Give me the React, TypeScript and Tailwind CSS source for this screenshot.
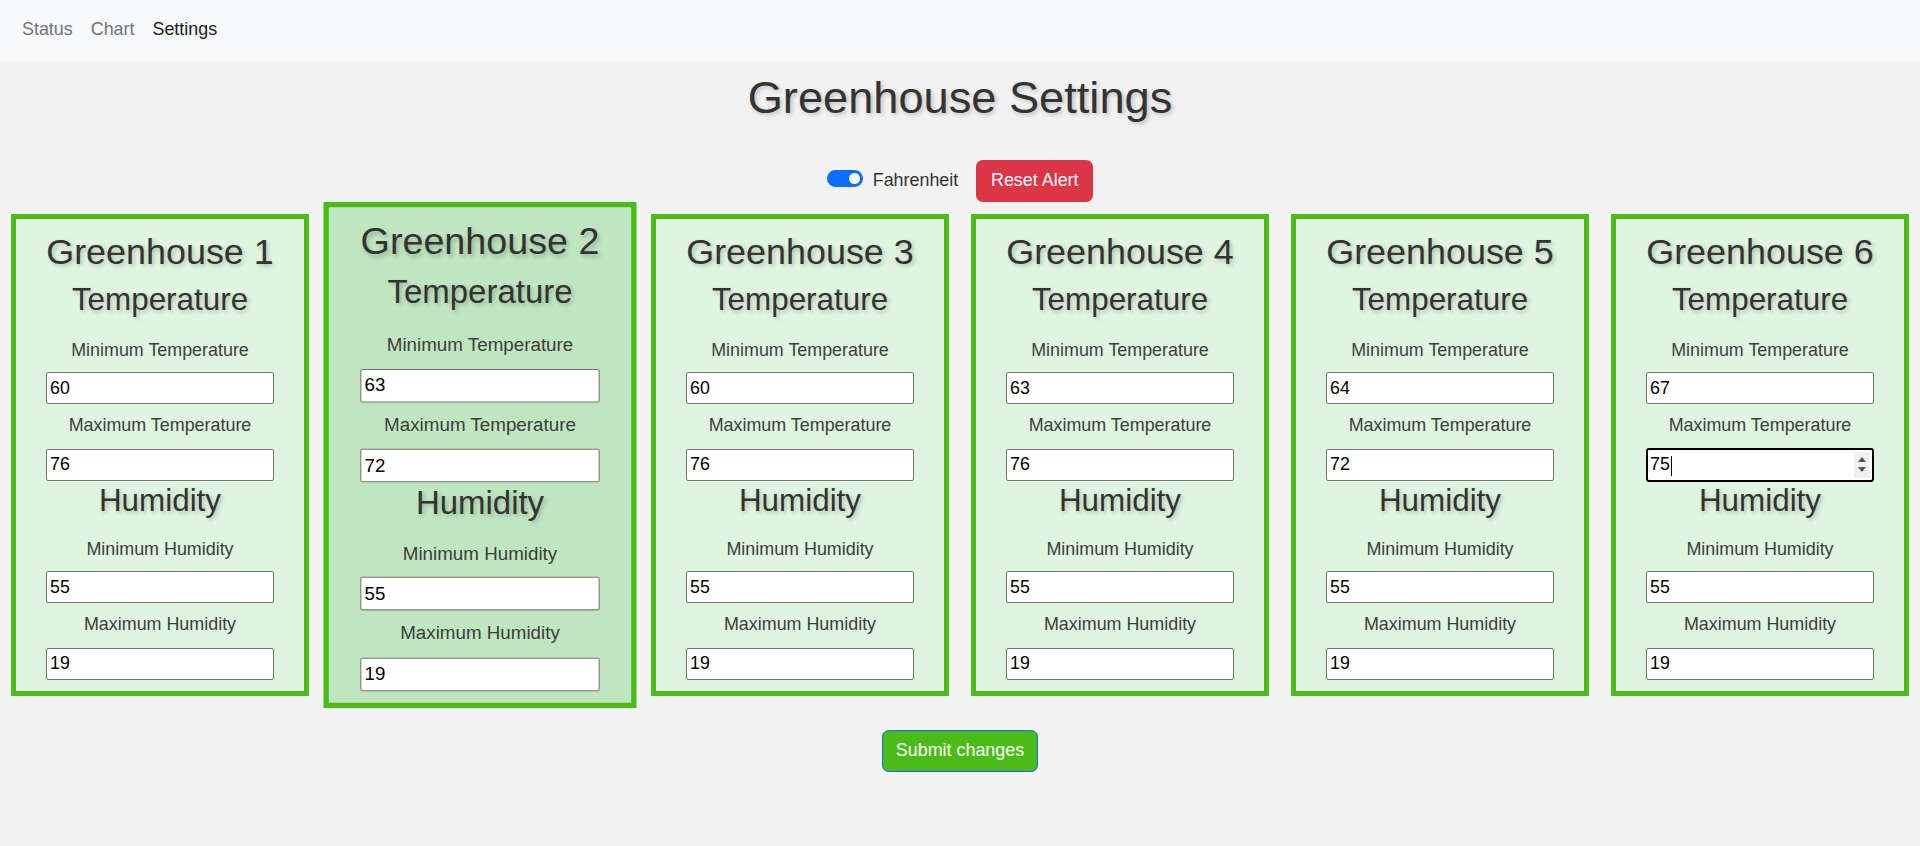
import React from "react";

interface House {
  id: number;
  minT: number;
  maxT: number;
  minH: number;
  maxH: number;
}

const houses: House[] = [
  { id: 1, minT: 60, maxT: 76, minH: 55, maxH: 19 },
  { id: 2, minT: 63, maxT: 72, minH: 55, maxH: 19 },
  { id: 3, minT: 60, maxT: 76, minH: 55, maxH: 19 },
  { id: 4, minT: 63, maxT: 76, minH: 55, maxH: 19 },
  { id: 5, minT: 64, maxT: 72, minH: 55, maxH: 19 },
  { id: 6, minT: 67, maxT: 75, minH: 55, maxH: 19 },
];

function Field({ value, focused }: { value: number; focused?: boolean }) {
  if (focused) {
    return (
      <div className="relative w-[228px] h-[34px] -my-[1px] border-2 border-black rounded-[3px] bg-white">
        <input
          type="text"
          readOnly
          value={String(value)}
          className="w-full h-full pl-[2px] text-[17.8px] text-black bg-transparent outline-none"
        />
        {/* caret */}
        <span className="absolute left-[23px] top-[6px] w-[1px] h-[20px] bg-black" />
        {/* spinner */}
        <span className="absolute right-[2px] top-[2px] w-[16px] h-[26px] bg-[#efefef] flex flex-col items-center justify-center gap-[5px]">
          <svg width="8" height="5" viewBox="0 0 8 5">
            <path d="M0 5 L4 0 L8 5 Z" fill="#555" />
          </svg>
          <svg width="8" height="5" viewBox="0 0 8 5">
            <path d="M0 0 L4 5 L8 0 Z" fill="#555" />
          </svg>
        </span>
      </div>
    );
  }
  return (
    <input
      type="text"
      readOnly
      value={String(value)}
      className="w-[228px] h-[32px] pl-[3px] border border-[#767676] rounded-[2px] bg-white text-[17.8px] text-black outline-none"
    />
  );
}

function Label({ children, mb }: { children: React.ReactNode; mb: string }) {
  return (
    <div className={`pt-[2px] text-[17.9px] leading-[26.4px] text-[#3d3d3d] ${mb}`}>{children}</div>
  );
}

function HouseCard({ house, active }: { house: House; active?: boolean }) {
  const shadow = "[text-shadow:2px_2px_4px_rgba(0,0,0,0.22)]";
  return (
    <div
      className={`h-[482px] border-[5px] border-[#4cbb17] flex flex-col items-center pt-[12px] text-center ${
        active ? "bg-[#c0e6c0] scale-105" : "bg-[#dff5df]"
      }`}
    >
      <h2 className={`text-[35.9px] leading-[42.2px] text-[#333] mb-[8px] ${shadow}`}>
        Greenhouse {house.id}
      </h2>
      <h3 className={`text-[31.4px] leading-[37px] text-[#333] mb-[17px] ${shadow}`}>Temperature</h3>
      <Label mb="mb-[9px]">Minimum Temperature</Label>
      <Field value={house.minT} />
      <div className="mt-[6px]" />
      <Label mb="mb-[10px]">Maximum Temperature</Label>
      <Field value={house.maxT} focused={house.id === 6} />
      <h3 className={`text-[31.4px] leading-[37px] text-[#333] mb-[15px] pt-[1px] ${shadow}`}>Humidity</h3>
      <Label mb="mb-[9px]">Minimum Humidity</Label>
      <Field value={house.minH} />
      <div className="mt-[6px]" />
      <Label mb="mb-[10px]">Maximum Humidity</Label>
      <Field value={house.maxH} />
    </div>
  );
}

export default function App() {
  return (
    <div className="min-h-screen bg-[#f2f2f2] font-['Liberation_Sans',Arial,sans-serif]">
      {/* Navbar */}
      <nav className="h-[61px] bg-[#f8f9fa] px-[13px] pt-[16px] flex text-[17.9px] leading-[26.4px]">
        <a className="px-[9px] text-[#737373]">Status</a>
        <a className="px-[9px] text-[#737373]">Chart</a>
        <a className="px-[9px] text-[#1a1a1a]">Settings</a>
      </nav>

      <h1 className="mt-[11px] text-center text-[45.2px] leading-[52.8px] text-[#333] [text-shadow:2px_2px_4px_rgba(0,0,0,0.22)]">
        Greenhouse Settings
      </h1>

      {/* Controls */}
      <div className="mt-[35px] flex justify-center items-center">
        <div className="flex items-center gap-[10px] mr-[18px] -mt-[5px]">
          <span className="relative w-[36px] h-[17px] rounded-full bg-[#0d6efd]">
            <span className="absolute right-[3px] top-[3px] w-[11px] h-[11px] rounded-full bg-white" />
          </span>
          <span className="pt-[3px] text-[17.9px] leading-[26px] text-[#333]">Fahrenheit</span>
        </div>
        <button className="w-[117px] h-[42px] rounded-[6.6px] bg-[#dc3545] border border-[#dc3545] text-white text-[17.9px]">
          Reset Alert
        </button>
      </div>

      {/* Cards */}
      <div className="mt-[12px] grid grid-cols-6">
        {houses.map((h) => (
          <div key={h.id} className="px-[11px]">
            <HouseCard house={h} active={h.id === 2} />
          </div>
        ))}
      </div>

      <div className="mt-[34px] flex justify-center">
        <button className="w-[156px] h-[42px] rounded-[6.6px] bg-[#4cbb17] border border-[#0d6efd] text-white text-[17.9px]">
          Submit changes
        </button>
      </div>
    </div>
  );
}
